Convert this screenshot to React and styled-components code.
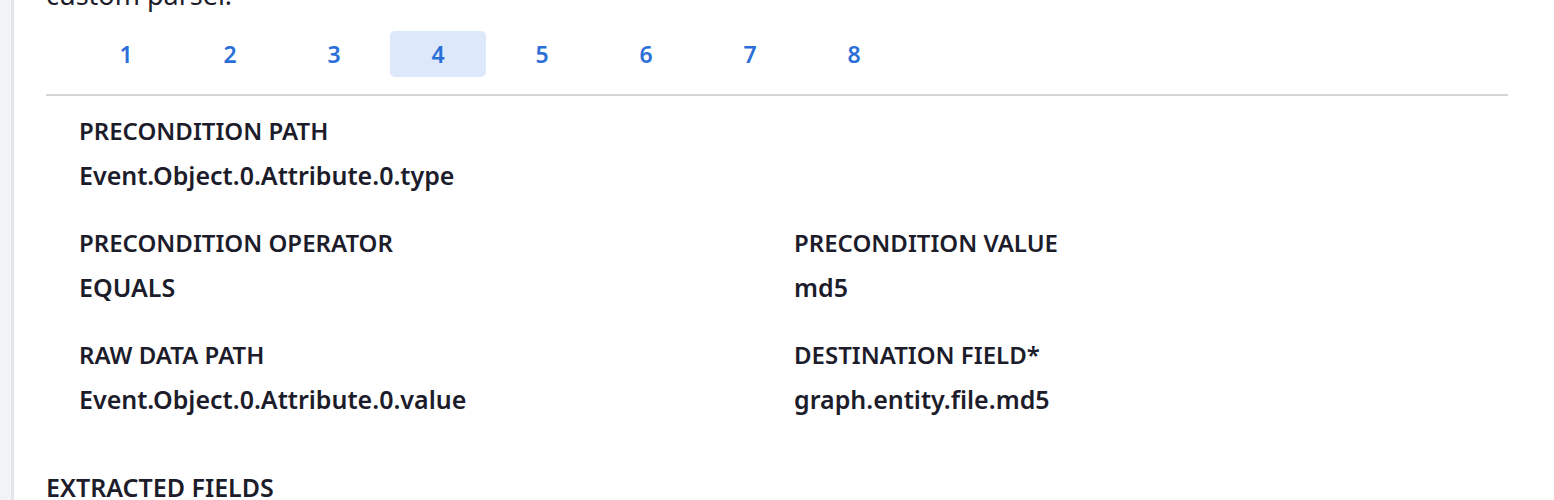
import React from 'react';
import styled, { createGlobalStyle } from 'styled-components';

const GlobalStyle = createGlobalStyle`
  html, body {
    margin: 0;
    padding: 0;
    background: #ffffff;
    overflow: hidden;
  }
  body {
    font-family: "Noto Sans", "Open Sans", sans-serif;
    color: #1c1c2b;
  }
`;

const StyledPage = styled.div`
  display: flex;
  height: 500px;
  overflow: hidden;
`;

const StyledSidebar = styled.div`
  flex: 0 0 11px;
  background-color: #f1f3f5;
  border-right: 3px solid #e3e5e8;
`;

const StyledMain = styled.div`
  flex: 1;
  padding: 0 46px 0 32px;
  margin-top: -23px;
`;

const StyledIntro = styled.p`
  margin: 0;
  font-size: 27px;
  line-height: 36px;
  font-weight: 400;
`;

const StyledTabs = styled.div`
  display: flex;
  gap: 8px;
  padding: 18px 0 17px 32px;
  border-bottom: 2px solid #d6d6d6;
`;

const StyledTab = styled.button`
  width: 96px;
  height: 46px;
  border: none;
  border-radius: 5px;
  background-color: ${({ active }) => (active ? '#dde8fb' : 'transparent')};
  color: #2a6fd8;
  font-family: inherit;
  font-size: 23px;
  font-weight: 600;
  cursor: pointer;
`;

const StyledFields = styled.div`
  display: grid;
  grid-template-columns: 715px 1fr;
  row-gap: 24px;
  padding: 13px 0 0 33px;
`;

const StyledField = styled.div`
  grid-column: ${({ full }) => (full ? '1 / -1' : 'auto')};
`;

const StyledLabel = styled.div`
  font-size: 24px;
  line-height: 44px;
  font-weight: 600;
  text-transform: uppercase;
`;

const StyledValue = styled.div`
  font-size: 25px;
  line-height: 44px;
  font-weight: 600;
`;

const StyledSectionHeading = styled.h3`
  margin: 44px 0 0 0;
  font-size: 25px;
  line-height: 44px;
  font-weight: 600;
`;

const tabs = [1, 2, 3, 4, 5, 6, 7, 8];

const fields = [
  { label: 'Precondition Path', value: 'Event.Object.0.Attribute.0.type', full: true },
  { label: 'Precondition Operator', value: 'EQUALS' },
  { label: 'Precondition Value', value: 'md5' },
  { label: 'Raw Data Path', value: 'Event.Object.0.Attribute.0.value' },
  { label: 'Destination Field*', value: 'graph.entity.file.md5' },
];

const App = () => (
  <>
    <GlobalStyle />
    <StyledPage>
      <StyledSidebar />
      <StyledMain>
        <StyledIntro>custom parser.</StyledIntro>
        <StyledTabs>
          {tabs.map(tab => (
            <StyledTab key={tab} active={tab === 4}>
              {tab}
            </StyledTab>
          ))}
        </StyledTabs>
        <StyledFields>
          {fields.map(field => (
            <StyledField key={field.label} full={field.full}>
              <StyledLabel>{field.label}</StyledLabel>
              <StyledValue>{field.value}</StyledValue>
            </StyledField>
          ))}
        </StyledFields>
        <StyledSectionHeading>EXTRACTED FIELDS</StyledSectionHeading>
      </StyledMain>
    </StyledPage>
  </>
);

export default App;
